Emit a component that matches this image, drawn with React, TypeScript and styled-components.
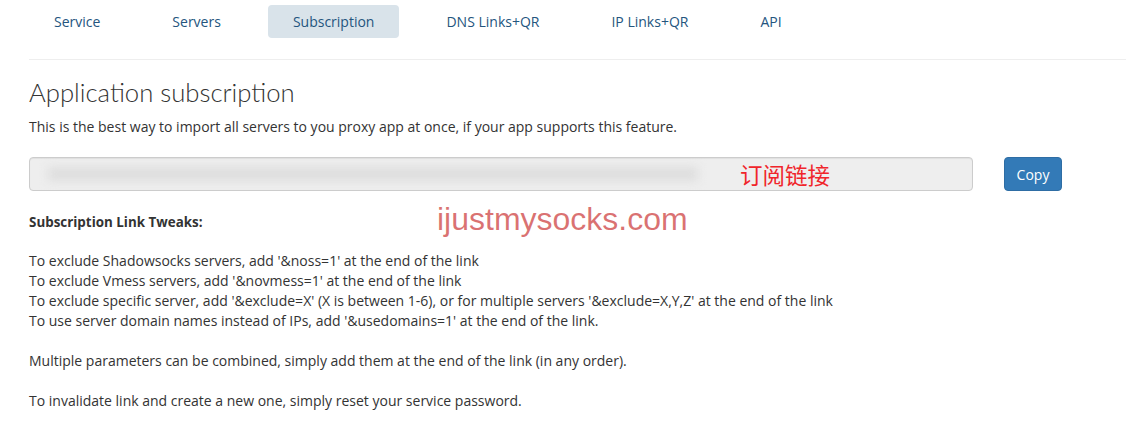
import * as React from 'react';
import styled, { createGlobalStyle } from 'styled-components';

const GlobalStyle = createGlobalStyle`
  body {
    margin: 0;
    background: #fff;
    font-family: "Open Sans", "Noto Sans CJK SC", sans-serif;
    font-size: 14px;
    line-height: 20px;
    color: #333;
  }
`;

const Page = styled.div`
  position: relative;
  padding: 5px 0 0 29px;
  height: 438px;
  overflow: hidden;
`;

const Nav = styled.ul`
  display: flex;
  gap: 22px;
  margin: 0;
  padding: 0;
  list-style: none;
`;

const Tab = styled.li<{ $active?: boolean }>`
  padding: 7px 25px 6px;
  border-radius: 4px;
  font-size: 14px;
  line-height: 20px;
  color: #24557e;
  background: ${p => (p.$active ? '#d9e3ea' : 'transparent')};
`;

const Divider = styled.hr`
  margin: 21px 0 0;
  border: 0;
  border-top: 1px solid #eee;
`;

const Title = styled.h3`
  margin: 16px 0 0;
  font-family: Lato, "Open Sans", sans-serif;
  font-weight: 300;
  font-size: 25.7px;
  line-height: 32px;
  color: #333;
`;

const Lead = styled.p`
  margin: 9px 0 0;
`;

const LinkRow = styled.div`
  display: flex;
  align-items: center;
  gap: 31px;
  margin-top: 20px;
  width: 1033px;
`;

const Field = styled.div`
  flex: 1;
  height: 32px;
  display: flex;
  align-items: center;
  border: 1px solid #ccc;
  border-radius: 4px;
  background: #eee;
  box-shadow: inset 0 1px 1px rgba(0, 0, 0, 0.06);
  overflow: hidden;
`;

const Blurred = styled.span`
  display: block;
  width: 650px;
  height: 14px;
  margin-left: 18px;
  background: #dedede;
  filter: blur(5px);
`;

const FieldLabel = styled.span`
  margin-left: 42px;
  font-size: 22.5px;
  color: #f0252b;
  line-height: 24px;
  padding-top: 4px;
`;

const CopyButton = styled.button`
  width: 58px;
  height: 34px;
  padding: 0;
  border: 1px solid #2e6da4;
  border-radius: 4px;
  background: #337ab7;
  color: #fff;
  font-family: "Open Sans", sans-serif;
  font-size: 14px;
`;

const Tweaks = styled.div`
  margin-top: 21px;
`;

const Label = styled.p`
  margin: 0 0 19px;
  font-size: 13.4px;
  font-weight: 700;
`;

const Block = styled.p`
  margin: 0 0 20px;
`;

const Watermark = styled.div`
  position: absolute;
  left: 437px;
  top: 199px;
  font-family: "Liberation Sans", Arial, sans-serif;
  font-size: 32px;
  line-height: 40px;
  color: rgba(204, 60, 60, 0.72);
  pointer-events: none;
`;

const tabs = ['Service', 'Servers', 'Subscription', 'DNS Links+QR', 'IP Links+QR', 'API'];

function App() {
  return (
    <Page>
      <GlobalStyle />
      <Nav>
        {tabs.map(t => (
          <Tab key={t} $active={t === 'Subscription'}>
            {t}
          </Tab>
        ))}
      </Nav>
      <Divider />
      <Title>Application subscription</Title>
      <Lead>This is the best way to import all servers to you proxy app at once, if your app supports this feature.</Lead>
      <LinkRow>
        <Field>
          <Blurred />
          <FieldLabel>订阅链接</FieldLabel>
        </Field>
        <CopyButton>Copy</CopyButton>
      </LinkRow>
      <Tweaks>
        <Label>Subscription Link Tweaks:</Label>
        <Block>
          To exclude Shadowsocks servers, add '&amp;noss=1' at the end of the link
          <br />
          To exclude Vmess servers, add '&amp;novmess=1' at the end of the link
          <br />
          To exclude specific server, add '&amp;exclude=X' (X is between 1-6), or for multiple servers '&amp;exclude=X,Y,Z' at the end of the link
          <br />
          To use server domain names instead of IPs, add '&amp;usedomains=1' at the end of the link.
        </Block>
        <Block>Multiple parameters can be combined, simply add them at the end of the link (in any order).</Block>
        <Block>To invalidate link and create a new one, simply reset your service password.</Block>
      </Tweaks>
      <Watermark>ijustmysocks.com</Watermark>
    </Page>
  );
}

export default App;
